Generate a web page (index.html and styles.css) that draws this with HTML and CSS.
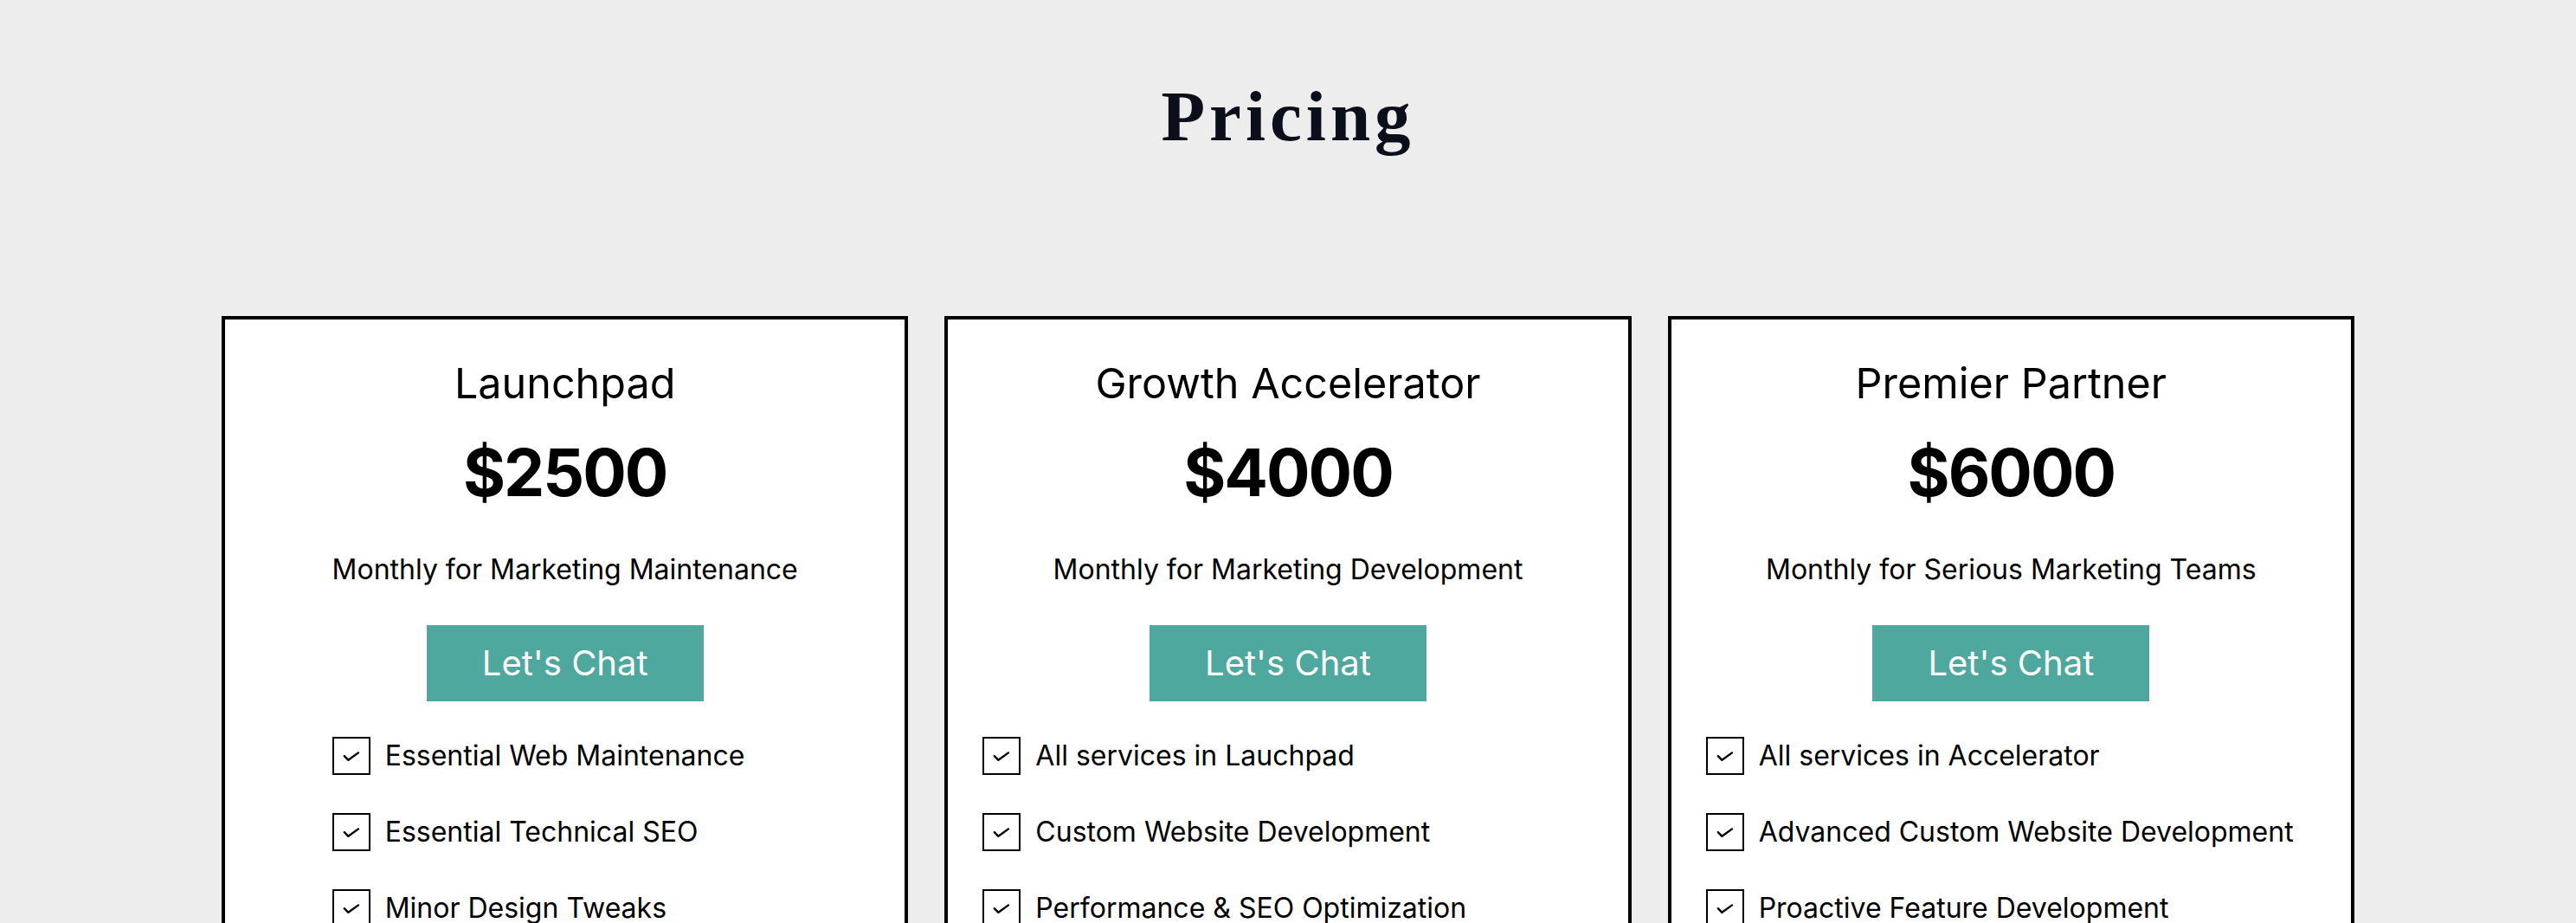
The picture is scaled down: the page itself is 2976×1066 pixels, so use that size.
FILE: index.html
```html
<!DOCTYPE html>
<html lang="en">
<head>
<meta charset="utf-8">
<title>Pricing</title>
<link rel="stylesheet" href="styles.css">
</head>
<body>
<main class="pricing">
  <h1 class="pricing__title">Pricing</h1>
  <div class="plans">
    <section class="plan">
      <h2 class="plan__name">Launchpad</h2>
      <p class="plan__price">$2500</p>
      <p class="plan__desc">Monthly for Marketing Maintenance</p>
      <a class="plan__cta" href="#">Let's Chat</a>
      <ul class="features features--compact">
        <li class="feature"><span class="feature__box"><svg viewBox="0 0 40 40" width="40" height="40"><polyline points="11.8,20.2 16.4,24.8 28,16.4"/></svg></span><span class="feature__text">Essential Web Maintenance</span></li>
        <li class="feature"><span class="feature__box"><svg viewBox="0 0 40 40" width="40" height="40"><polyline points="11.8,20.2 16.4,24.8 28,16.4"/></svg></span><span class="feature__text">Essential Technical SEO</span></li>
        <li class="feature"><span class="feature__box"><svg viewBox="0 0 40 40" width="40" height="40"><polyline points="11.8,20.2 16.4,24.8 28,16.4"/></svg></span><span class="feature__text">Minor Design Tweaks</span></li>
      </ul>
    </section>
    <section class="plan">
      <h2 class="plan__name">Growth Accelerator</h2>
      <p class="plan__price">$4000</p>
      <p class="plan__desc">Monthly for Marketing Development</p>
      <a class="plan__cta" href="#">Let's Chat</a>
      <ul class="features">
        <li class="feature"><span class="feature__box"><svg viewBox="0 0 40 40" width="40" height="40"><polyline points="11.8,20.2 16.4,24.8 28,16.4"/></svg></span><span class="feature__text">All services in Lauchpad</span></li>
        <li class="feature"><span class="feature__box"><svg viewBox="0 0 40 40" width="40" height="40"><polyline points="11.8,20.2 16.4,24.8 28,16.4"/></svg></span><span class="feature__text">Custom Website Development</span></li>
        <li class="feature"><span class="feature__box"><svg viewBox="0 0 40 40" width="40" height="40"><polyline points="11.8,20.2 16.4,24.8 28,16.4"/></svg></span><span class="feature__text">Performance &amp; SEO Optimization</span></li>
      </ul>
    </section>
    <section class="plan">
      <h2 class="plan__name">Premier Partner</h2>
      <p class="plan__price">$6000</p>
      <p class="plan__desc">Monthly for Serious Marketing Teams</p>
      <a class="plan__cta" href="#">Let's Chat</a>
      <ul class="features">
        <li class="feature"><span class="feature__box"><svg viewBox="0 0 40 40" width="40" height="40"><polyline points="11.8,20.2 16.4,24.8 28,16.4"/></svg></span><span class="feature__text">All services in Accelerator</span></li>
        <li class="feature"><span class="feature__box"><svg viewBox="0 0 40 40" width="40" height="40"><polyline points="11.8,20.2 16.4,24.8 28,16.4"/></svg></span><span class="feature__text">Advanced Custom Website Development</span></li>
        <li class="feature"><span class="feature__box"><svg viewBox="0 0 40 40" width="40" height="40"><polyline points="11.8,20.2 16.4,24.8 28,16.4"/></svg></span><span class="feature__text">Proactive Feature Development</span></li>
      </ul>
    </section>
  </div>
</main>
</body>
</html>
```
FILE: styles.css
```css
html, body {
  margin: 0;
  padding: 0;
}

body {
  background: #ededed;
  color: #000;
  font-family: Inter, "Noto Sans", "Liberation Sans", sans-serif;
}

.pricing {
  padding: 88px 256px 0;
}

.pricing__title {
  margin: 0;
  text-align: center;
  font-family: "Liberation Serif", "DejaVu Serif", serif;
  font-weight: 700;
  font-size: 83px;
  line-height: 92px;
  letter-spacing: 5px;
  color: #0b0f1a;
}

.plans {
  margin-top: 185px;
  display: grid;
  grid-template-columns: repeat(3, 1fr);
  gap: 42px;
}

.plan {
  background: #fff;
  border: 4px solid #000;
  padding: 44px 40px 40px;
  display: flex;
  flex-direction: column;
  align-items: center;
}

.plan__name {
  margin: 0;
  font-size: 48.5px;
  font-weight: 400;
  line-height: 59px;
}

.plan__price {
  margin: 28px 0 0;
  font-size: 75px;
  font-weight: 700;
  line-height: 92px;
  letter-spacing: -2px;
}

.plan__desc {
  margin: 48px 0 0;
  font-size: 32px;
  line-height: 36px;
}

.plan__cta {
  margin-top: 46px;
  display: block;
  background: #4ea89e;
  color: #fbfbfb;
  text-decoration: none;
  font-size: 40px;
  line-height: 48px;
  padding: 20px 64px;
}

.features {
  list-style: none;
  margin: 41px 0 0;
  padding: 0;
  align-self: stretch;
  display: flex;
  flex-direction: column;
  gap: 44px;
}

.features--compact {
  align-self: center;
  width: 538px;
}

.feature {
  display: flex;
  align-items: center;
  gap: 17px;
  font-size: 32px;
  line-height: 36px;
}

.feature__box {
  flex: none;
  width: 44px;
  height: 44px;
  box-sizing: border-box;
  border: 2px solid #000;
  display: block;
}

.feature__box svg {
  display: block;
  fill: none;
  stroke: #000;
  stroke-width: 2.4;
  stroke-linecap: round;
  stroke-linejoin: round;
}
```
